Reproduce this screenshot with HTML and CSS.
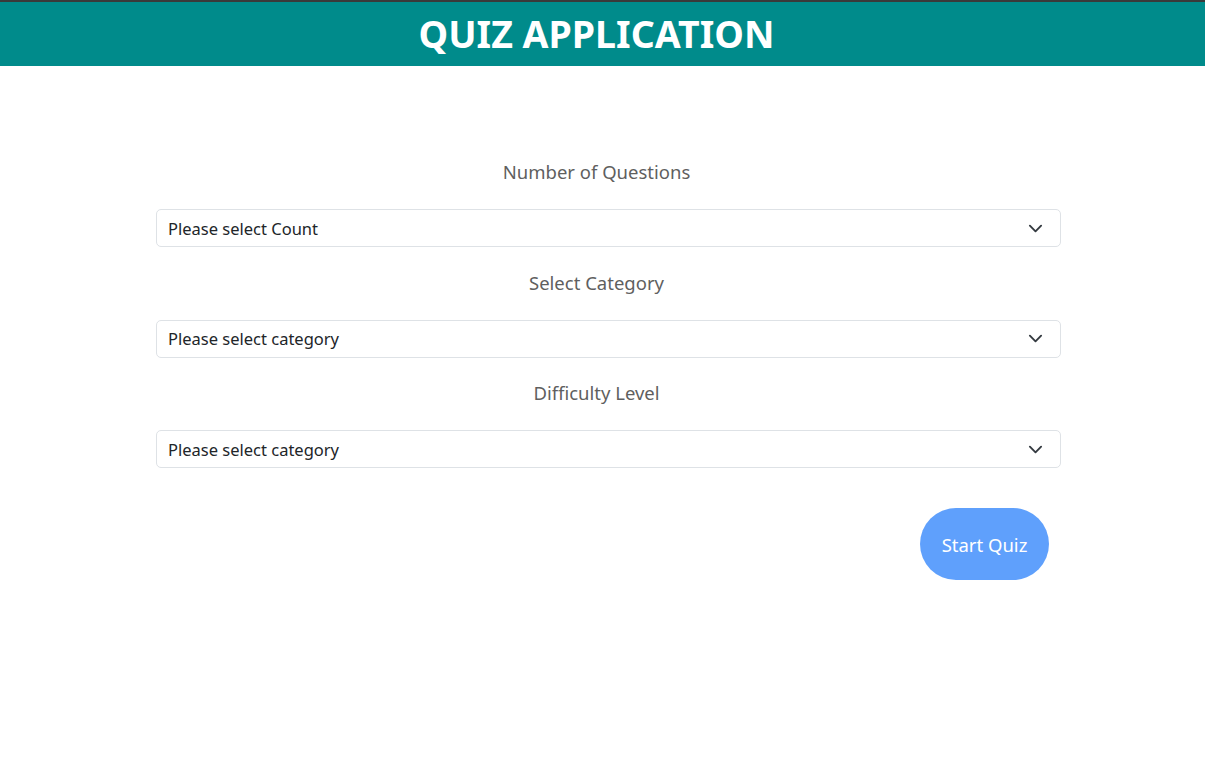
FILE: index.html
```html
<!DOCTYPE html>
<html lang="en">
<head>
<meta charset="utf-8">
<title>Quiz Application</title>
<link rel="stylesheet" href="styles.css">
</head>
<body>
<div class="topline"></div>
<header class="header"><h1 class="title">QUIZ APPLICATION</h1></header>
<main class="form">
  <div class="group">
    <label class="label">Number of Questions</label>
    <div class="select"><span>Please select Count</span><svg class="chev" viewBox="0 0 16 16" width="16" height="16"><path d="M2 5l6 6 6-6" fill="none" stroke="#343a40" stroke-width="2" stroke-linecap="round" stroke-linejoin="round"/></svg></div>
  </div>
  <div class="group">
    <label class="label">Select Category</label>
    <div class="select"><span>Please select category</span><svg class="chev" viewBox="0 0 16 16" width="16" height="16"><path d="M2 5l6 6 6-6" fill="none" stroke="#343a40" stroke-width="2" stroke-linecap="round" stroke-linejoin="round"/></svg></div>
  </div>
  <div class="group">
    <label class="label">Difficulty Level</label>
    <div class="select"><span>Please select category</span><svg class="chev" viewBox="0 0 16 16" width="16" height="16"><path d="M2 5l6 6 6-6" fill="none" stroke="#343a40" stroke-width="2" stroke-linecap="round" stroke-linejoin="round"/></svg></div>
  </div>
  <div class="actions"><button class="start">Start Quiz</button></div>
</main>
</body>
</html>
```
FILE: styles.css
```css
* { box-sizing: border-box; }
body { margin: 0; font-family: "Noto Sans", "Open Sans", sans-serif; background: #fff; }
.topline { height: 2px; background: #3a3a3a; }
.header { height: 64px; background: #008b8b; display: flex; align-items: center; justify-content: center; padding-right: 12px; }
.title { margin: 0; color: #fff; font-size: 37.5px; font-weight: 700; letter-spacing: 0; line-height: 1; }
.form { width: 905px; margin: 94px 0 0 156px; }
.group { display: flex; flex-direction: column; align-items: stretch; margin-bottom: 23.5px; }
.label { text-align: center; color: #5f5f5f; font-size: 18.5px; line-height: 24px; margin-bottom: 25px; padding-right: 24px; }
.select { height: 38px; border: 1px solid #dee2e6; border-radius: 5px; display: flex; align-items: center; justify-content: space-between; padding: 0 17px 0 11px; font-size: 16.5px; color: #212529; }
.chev { width: 15px; height: 15px; }
.actions { display: flex; justify-content: flex-end; padding-right: 12px; padding-top: 16.5px; }
.start { width: 129px; height: 72px; border: none; border-radius: 36px; background: #5fa0fc; color: #fff; font-family: inherit; font-size: 18.5px; padding: 0; }
```
